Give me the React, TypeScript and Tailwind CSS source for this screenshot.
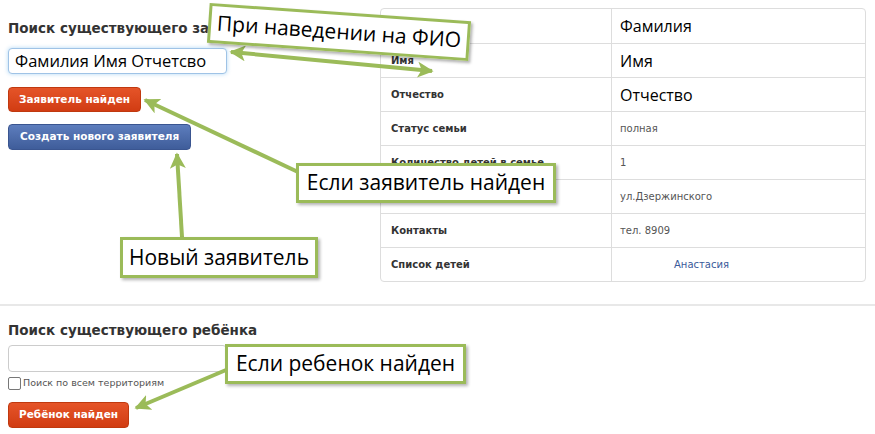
import React from 'react';

const rows: { label: string; value: string; kind?: 'big' | 'link' }[] = [
  { label: 'Фамилия', value: 'Фамилия', kind: 'big' },
  { label: 'Имя', value: 'Имя', kind: 'big' },
  { label: 'Отчество', value: 'Отчество', kind: 'big' },
  { label: 'Статус семьи', value: 'полная' },
  { label: 'Количество детей в семье', value: '1' },
  { label: 'Адрес', value: 'ул.Дзержинского' },
  { label: 'Контакты', value: 'тел. 8909' },
  { label: 'Список детей', value: 'Анастасия', kind: 'link' },
];

function Callout({ className, children }: { className: string; children: React.ReactNode }) {
  return (
    <div
      className={
        'absolute flex items-center justify-center bg-white border-[3px] border-[#9bbb59] shadow-[2px_2px_3px_rgba(0,0,0,0.3)] font-["Open_Sans",sans-serif] text-[21px] text-black whitespace-nowrap ' +
        className
      }
    >
      {children}
    </div>
  );
}

function Arrows() {
  const g = '#9bbb59';
  return (
    <svg className="absolute inset-0 pointer-events-none" width="875" height="434" viewBox="0 0 875 434">
      <defs>
        <marker id="head" viewBox="0 0 10 10" refX="9" refY="5" markerWidth="16" markerHeight="16" markerUnits="userSpaceOnUse" orient="auto-start-reverse">
          <path d="M0 0 L10 5 L0 10 L2.5 5 Z" fill={g} />
        </marker>
      </defs>
      <line x1="231" y1="52" x2="432" y2="71" stroke={g} strokeWidth="4" markerStart="url(#head)" markerEnd="url(#head)" />
      <line x1="298" y1="172" x2="145" y2="100" stroke={g} strokeWidth="4" markerEnd="url(#head)" />
      <line x1="182" y1="237" x2="177" y2="154" stroke={g} strokeWidth="4" markerEnd="url(#head)" />
      <line x1="226" y1="370" x2="136" y2="408" stroke={g} strokeWidth="4" markerEnd="url(#head)" />
    </svg>
  );
}

export default function App() {
  return (
    <div className="relative w-[875px] h-[434px] overflow-hidden bg-white font-['DejaVu_Sans',sans-serif] text-[#333]">
      <div className="flex pt-2">
        <div className="w-[380px] pl-2 flex flex-col items-start">
          <h2 className="mt-[11px] h-[18px] leading-[18px] text-[13.5px] font-bold whitespace-nowrap">Поиск существующего заявителя</h2>
          <div className="mt-[11px] w-[219px] h-[26px] rounded-[4px] border border-[#9fc3e6] shadow-[0_0_4px_rgba(82,168,236,0.45)] bg-white flex items-center pl-[6px] font-['Open_Sans',sans-serif] text-[16.5px] text-black">
            Фамилия Имя Отчетсво
          </div>
          <button className="mt-[13px] h-[25px] px-[10px] rounded-[4px] bg-gradient-to-b from-[#e55428] to-[#d13c12] border border-[#c0390f] text-white text-[10.5px] font-bold">
            Заявитель найден
          </button>
          <button className="mt-[12px] h-[26px] px-[11px] rounded-[4px] bg-gradient-to-b from-[#5d7dbd] to-[#3f5d9a] border border-[#3a5590] text-white text-[10.5px] font-bold">
            Создать нового заявителя
          </button>
        </div>
        <div className="w-[486px] border border-[#dddddd] rounded-[4px] flex flex-col">
          {rows.map((r, i) => (
            <div key={r.label} className={'flex h-[34px] ' + (i > 0 ? 'border-t border-[#dddddd]' : '')}>
              <div className="w-[231px] border-r border-[#dddddd] flex items-center pl-[10px] text-[10px] font-bold text-[#333]">{r.label}</div>
              <div className="flex-1 flex items-center pl-[8px]">
                {r.kind === 'big' ? (
                  <span className="font-['Open_Sans',sans-serif] text-[16px] text-black">{r.value}</span>
                ) : r.kind === 'link' ? (
                  <span className="pl-[54px] text-[10px] text-[#3a5a9a]">{r.value}</span>
                ) : (
                  <span className="text-[10px] text-[#555]">{r.value}</span>
                )}
              </div>
            </div>
          ))}
        </div>
      </div>

      <div className="mt-[22px] h-[2px] bg-[#e8e8e8]" />

      <div className="pl-2 flex flex-col items-start">
        <h2 className="mt-[15px] h-[18px] leading-[18px] text-[13.5px] font-bold whitespace-nowrap">Поиск существующего ребёнка</h2>
        <div className="mt-[6px] w-[219px] h-[27px] rounded-[4px] border border-[#cccccc] bg-white" />
        <label className="mt-[4px] flex items-center gap-[2px] text-[9.5px] text-[#555]">
          <span className="w-[13px] h-[13px] border border-[#777] rounded-[2px] bg-white" />
          Поиск по всем территориям
        </label>
        <button className="mt-[12px] h-[26px] px-[10px] rounded-[4px] bg-gradient-to-b from-[#e55428] to-[#d13c12] border border-[#c0390f] text-white text-[10.5px] font-bold">
          Ребёнок найден
        </button>
      </div>

      <Arrows />
      <Callout className="left-[208px] top-[12px] w-[262px] h-[40px] rotate-[4deg]">При наведении на ФИО</Callout>
      <Callout className="left-[296px] top-[163px] w-[260px] h-[40px]">Если заявитель найден</Callout>
      <Callout className="left-[120px] top-[237px] w-[198px] h-[41px]">Новый заявитель</Callout>
      <Callout className="left-[225px] top-[344px] w-[241px] h-[40px]">Если ребенок найден</Callout>
    </div>
  );
}
